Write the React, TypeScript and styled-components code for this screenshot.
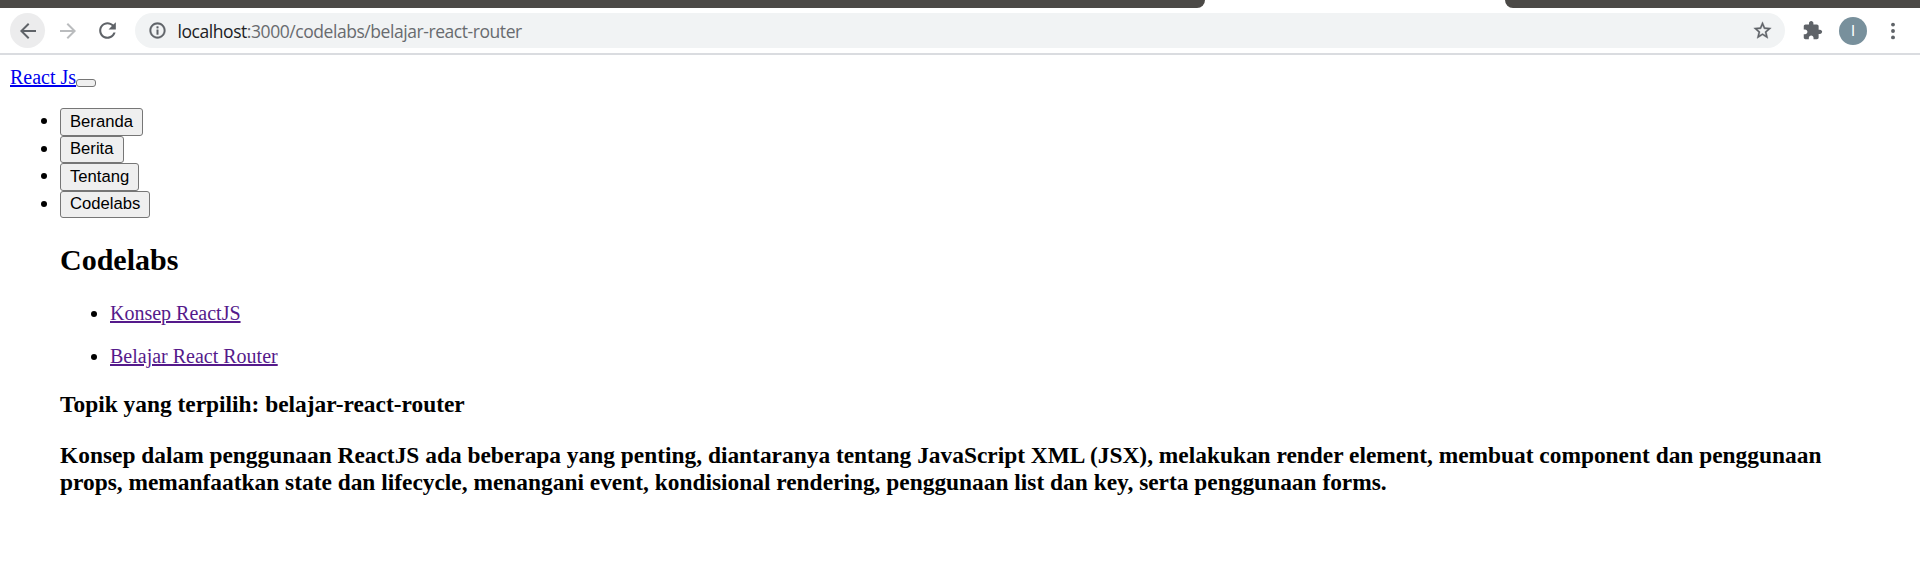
import React from 'react';
import styled, { createGlobalStyle } from 'styled-components';

const GlobalStyle = createGlobalStyle`
  body {
    margin: 0;
    background: #fff;
    color: #000;
    font-family: 'Liberation Serif', 'Times New Roman', serif;
    font-size: 20px;
    line-height: 23px;
  }
`;

const TabStrip = styled.div`
  display: flex;
  justify-content: space-between;
  height: 8px;
`;

const StripSegment = styled.div<{ $width: number; $side: 'left' | 'right' }>`
  width: ${(p) => p.$width}px;
  height: 8px;
  background: #4b4946;
  border-radius: ${(p) => (p.$side === 'left' ? '0 0 8px 0' : '0 0 0 8px')};
`;

const Toolbar = styled.header`
  display: flex;
  align-items: center;
  box-sizing: border-box;
  height: 47px;
  padding: 5px 10px;
  border-bottom: 2px solid #dadce0;
  background: #fff;
`;

const ToolButton = styled.div<{ $active?: boolean; $gap?: number }>`
  display: flex;
  flex: none;
  align-items: center;
  justify-content: center;
  width: 35px;
  height: 35px;
  margin-right: ${(p) => p.$gap ?? 5}px;
  border-radius: 50%;
  background: ${(p) => (p.$active ? '#ececed' : 'transparent')};

  svg {
    display: block;
  }
`;

const AddressBar = styled.div`
  display: flex;
  flex: 1;
  align-items: center;
  box-sizing: border-box;
  height: 35px;
  margin-right: 10px;
  padding: 0 12px 0 13px;
  border-radius: 18px;
  background: #f1f3f4;

  svg {
    display: block;
    flex: none;
  }
`;

const Url = styled.span`
  flex: 1;
  margin-left: 10.5px;
  color: #686b6f;
  font-family: 'Open Sans', 'Noto Sans', sans-serif;
  font-size: 17.5px;
  line-height: 24px;
  letter-spacing: -0.44px;
  white-space: nowrap;
`;

const Host = styled.span`
  color: #202124;
`;

const Avatar = styled.div`
  display: flex;
  flex: none;
  align-items: center;
  justify-content: center;
  box-sizing: border-box;
  width: 28px;
  height: 28px;
  margin: 0 8px 0 9px;
  padding-top: 1px;
  border-radius: 50%;
  background: #78909c;
  color: #fff;
  font-family: Roboto, sans-serif;
  font-size: 15px;
`;

const Page = styled.main`
  padding: 10px;
`;

const Navbar = styled.nav`
  display: flex;
  align-items: flex-start;
  height: 23px;
  line-height: 24px;
`;

const TextLink = styled.a<{ $visited?: boolean }>`
  color: ${(p) => (p.$visited ? '#551a8b' : '#0000ee')};
  text-decoration: underline;
  text-decoration-thickness: 2px;
  text-underline-offset: 1px;
`;

const Toggler = styled.button`
  box-sizing: border-box;
  width: 20px;
  height: 8px;
  margin: 14px 0 0;
  padding: 0;
  border: 1px solid #767676;
  border-radius: 3px;
  background: #efefef;
`;

const Menu = styled.ul`
  margin: 20px 0 0;
  padding-left: 50px;
`;

const MenuItem = styled.li`
  height: 27.5px;
  line-height: 25.5px;
`;

const MenuButton = styled.button`
  box-sizing: border-box;
  height: 27.5px;
  padding: 0 9px;
  border: 1px solid #767676;
  border-radius: 3px;
  background: #efefef;
  color: #000;
  font-family: 'Liberation Sans', Arial, sans-serif;
  font-size: 16.667px;
  line-height: 24px;
  vertical-align: top;
`;

const Section = styled.section`
  padding: 25px 50px 0;
`;

const Title = styled.h2`
  margin: 0 0 25px;
  font-size: 30px;
  line-height: 34px;
`;

const TopicList = styled.ul`
  display: grid;
  gap: 20px;
  margin: 0 0 23.4px;
  padding-left: 50px;
`;

const Topic = styled.h3`
  margin: 0 0 23.4px;
  font-size: 23.4px;
  line-height: 27px;
`;

const BackIcon = () => (
  <svg width="24" height="24" viewBox="0 0 24 24" fill="#5f6368">
    <path d="M20 11H7.83l5.59-5.59L12 4l-8 8 8 8 1.41-1.41L7.83 13H20v-2z" />
  </svg>
);

const ForwardIcon = () => (
  <svg width="24" height="24" viewBox="0 0 24 24" fill="#babcbe">
    <path d="M12 4l-1.41 1.41L16.17 11H4v2h12.17l-5.58 5.59L12 20l8-8z" />
  </svg>
);

const ReloadIcon = () => (
  <svg width="25" height="25" viewBox="0 0 24 24" fill="#5f6368">
    <path d="M17.65 6.35C16.2 4.9 14.21 4 12 4c-4.42 0-7.99 3.58-7.99 8s3.57 8 7.99 8c3.73 0 6.84-2.55 7.73-6h-2.08c-.82 2.33-3.04 4-5.65 4-3.31 0-6-2.69-6-6s2.69-6 6-6c1.66 0 3.14.69 4.22 1.78L13 11h7V4l-2.35 2.35z" />
  </svg>
);

const InfoIcon = () => (
  <svg width="19" height="19" viewBox="0 0 24 24" fill="#5f6368">
    <path d="M11 17h2v-6h-2v6zm0-8h2V7h-2v2zm1-7C6.48 2 2 6.48 2 12s4.48 10 10 10 10-4.48 10-10S17.52 2 12 2zm0 18c-4.41 0-8-3.59-8-8s3.59-8 8-8 8 3.59 8 8-3.59 8-8 8z" stroke="#5f6368" strokeWidth="0.5" />
  </svg>
);

const StarIcon = () => (
  <svg width="21" height="21" viewBox="0 0 24 24" fill="#5f6368">
    <path d="M22 9.24l-7.19-.62L12 2 9.19 8.63 2 9.24l5.46 4.73L5.82 21 12 17.27 18.18 21l-1.63-7.03L22 9.24zM12 15.4l-3.76 2.27 1-4.28-3.32-2.88 4.38-.38L12 6.1l1.71 4.04 4.38.38-3.32 2.88 1 4.28L12 15.4z" stroke="#5f6368" strokeWidth="0.4" />
  </svg>
);

const ExtensionsIcon = () => (
  <svg width="21" height="21" viewBox="0 0 24 24" fill="#5f6368">
    <path d="M20.5 11H19V7c0-1.1-.9-2-2-2h-4V3.5C13 2.12 11.88 1 10.5 1S8 2.12 8 3.5V5H4c-1.1 0-1.99.9-1.99 2v3.8H3.5c1.49 0 2.7 1.21 2.7 2.7s-1.21 2.7-2.7 2.7H2V20c0 1.1.9 2 2 2h3.8v-1.5c0-1.49 1.21-2.7 2.7-2.7s2.7 1.21 2.7 2.7V22H17c1.1 0 2-.9 2-2v-4h1.5c1.38 0 2.5-1.12 2.5-2.5S21.88 11 20.5 11z" />
  </svg>
);

const MoreIcon = () => (
  <svg width="24" height="24" viewBox="0 0 24 24" fill="#5f6368">
    <circle cx="12" cy="5.6" r="1.95" />
    <circle cx="12" cy="12" r="1.95" />
    <circle cx="12" cy="18.4" r="1.95" />
  </svg>
);

const menu = ['Beranda', 'Berita', 'Tentang', 'Codelabs'];
const topics = ['Konsep ReactJS', 'Belajar React Router'];

export default function App() {
  return (
    <>
      <GlobalStyle />
      <TabStrip>
        <StripSegment $width={1205} $side="left" />
        <StripSegment $width={415} $side="right" />
      </TabStrip>
      <Toolbar>
        <ToolButton $active><BackIcon /></ToolButton>
        <ToolButton><ForwardIcon /></ToolButton>
        <ToolButton $gap={10}><ReloadIcon /></ToolButton>
        <AddressBar>
          <InfoIcon />
          <Url><Host>localhost</Host>:3000/codelabs/belajar-react-router</Url>
          <StarIcon />
        </AddressBar>
        <ToolButton $gap={0}><ExtensionsIcon /></ToolButton>
        <Avatar>I</Avatar>
        <ToolButton $gap={0}><MoreIcon /></ToolButton>
      </Toolbar>
      <Page>
        <Navbar>
          <TextLink href="#">React Js</TextLink>
          <Toggler aria-label="Menu" />
        </Navbar>
        <Menu>
          {menu.map((label) => (
            <MenuItem key={label}><MenuButton>{label}</MenuButton></MenuItem>
          ))}
        </Menu>
        <Section>
          <Title>Codelabs</Title>
          <TopicList>
            {topics.map((label) => (
              <li key={label}><TextLink $visited href="#">{label}</TextLink></li>
            ))}
          </TopicList>
          <Topic>Topik yang terpilih: belajar-react-router</Topic>
          <Topic>
            Konsep dalam penggunaan ReactJS ada beberapa yang penting, diantaranya tentang JavaScript XML (JSX), melakukan render element, membuat component dan penggunaan props, memanfaatkan state dan lifecycle, menangani event, kondisional rendering, penggunaan list dan key, serta penggunaan forms.
          </Topic>
        </Section>
      </Page>
    </>
  );
}
